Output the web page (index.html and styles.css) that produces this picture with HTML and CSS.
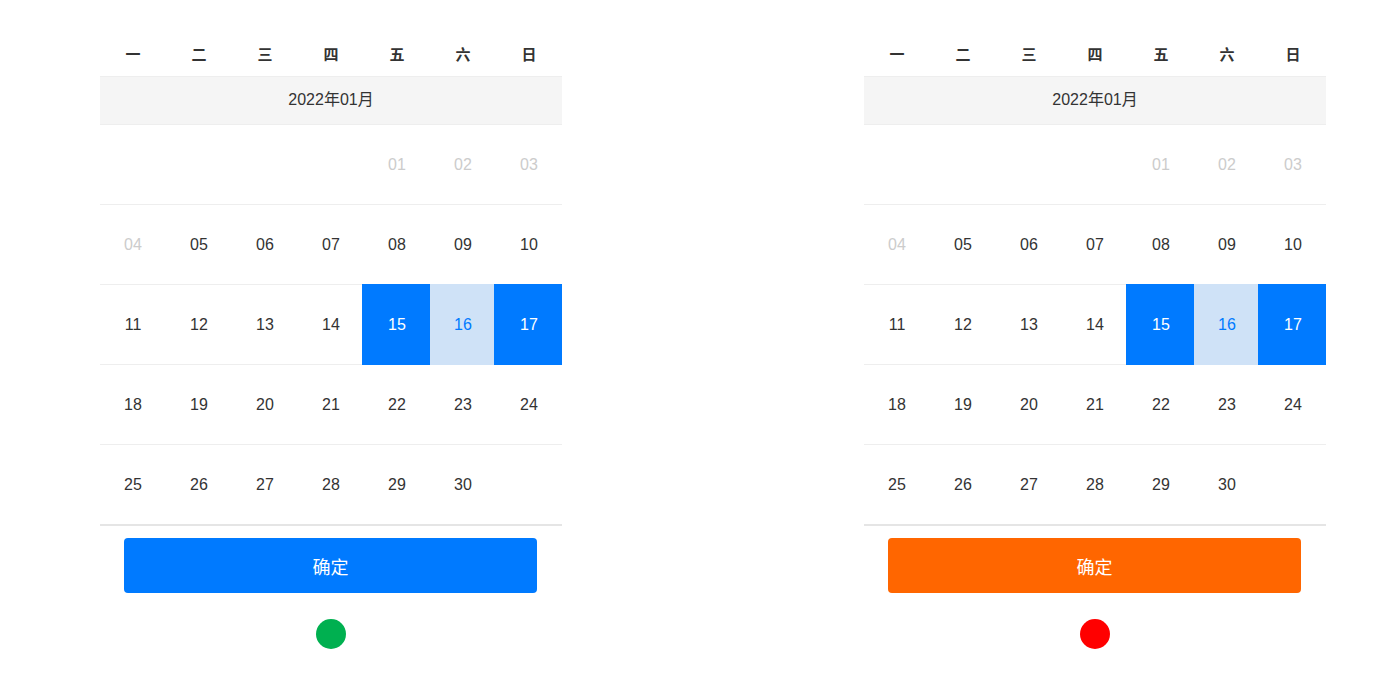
FILE: index.html
```html
<!DOCTYPE html>
<html lang="zh-CN">
<head>
  <meta charset="UTF-8">
  <meta name="viewport" content="width=device-width, initial-scale=1.0">
  <link rel="stylesheet" href="styles.css">
  <title>日历</title>
</head>
<body>
  <div id="page">
    <div class="calendar" data-theme="blue"></div>
    <div class="calendar" data-theme="orange"></div>
  </div>

  <script>
    // Week day labels
    const weekDays = ['一', '二', '三', '四', '五', '六', '日'];

    // Function to build one calendar panel
    function buildCalendar(panel) {
      let html = '<div class="week">';
      weekDays.forEach((d) => {
        html += `<span>${d}</span>`;
      });
      html += '</div>';
      html += '<div class="month">2022年01月</div>';
      html += '<div class="days">';

      const cells = ['', '', '', '', '01', '02', '03'];
      for (let i = 4; i <= 30; i++) {
        cells.push(String(i).padStart(2, '0'));
      }
      cells.push('');

      cells.forEach((text, i) => {
        let cls = 'day';
        if (i >= 4 && i <= 7) cls += ' other';
        if (text === '15' || text === '17') cls += ' selected';
        if (text === '16') cls += ' range';
        html += `<div class="${cls}">${text}</div>`;
      });
      html += '</div>';
      html += '<div class="footer"><button class="confirm">确定</button></div>';
      html += '<div class="dot"></div>';
      panel.innerHTML = html;
    }

    document.querySelectorAll('.calendar').forEach(buildCalendar);
  </script>
</body>
</html>
```

FILE: styles.css
```css
body {
  margin: 0;
  background: #fff;
  font-family: "Liberation Sans", "Noto Sans CJK SC", sans-serif;
  color: #333;
}

#page {
  display: flex;
  gap: 302px;
  padding: 30px 0 0 100px;
}

.calendar {
  width: 462px;
}

.week {
  display: grid;
  grid-template-columns: repeat(7, 1fr);
  height: 46px;
  align-items: center;
  border-bottom: 1px solid #eee;
  font-size: 15px;
  font-weight: bold;
  text-align: center;
}

.month {
  height: 47px;
  line-height: 46px;
  background: #f5f5f5;
  border-bottom: 1px solid #eee;
  text-align: center;
  font-size: 16px;
}

.days {
  display: grid;
  grid-template-columns: repeat(7, 1fr);
  border-bottom: 2px solid #e5e5e5;
}

.day {
  height: 79px;
  border-bottom: 1px solid #eee;
  display: flex;
  align-items: center;
  justify-content: center;
  font-size: 16px;
}

.days .day:nth-last-child(-n+7) {
  border-bottom: none;
}

.day.other {
  color: #ccc;
}

.days .day:nth-child(-n+7) {
  color: #ccc;
}

.day.selected {
  background: #007aff;
  color: #fff;
  border-bottom-color: #007aff;
  box-shadow: -2px -1px 0 #007aff, -2px 0 0 #007aff, 0 -1px 0 #007aff;
}

.day.range {
  background: #cfe2f7;
  color: #007aff;
  border-bottom-color: #cfe2f7;
  box-shadow: 0 -1px 0 #cfe2f7;
}

.footer {
  padding: 12px 25px 0 24px;
}

.confirm {
  display: block;
  width: 100%;
  height: 55px;
  border: none;
  border-radius: 4px;
  background: #007aff;
  color: #fff;
  font-family: "Noto Sans CJK SC", sans-serif;
  font-size: 18px;
}

.calendar[data-theme="orange"] .confirm {
  background: #ff6600;
}

.dot {
  width: 30px;
  height: 30px;
  border-radius: 50%;
  margin: 26px auto 0 auto;
  background: #00b050;
}

.calendar[data-theme="orange"] .dot {
  background: #ff0000;
}
```
